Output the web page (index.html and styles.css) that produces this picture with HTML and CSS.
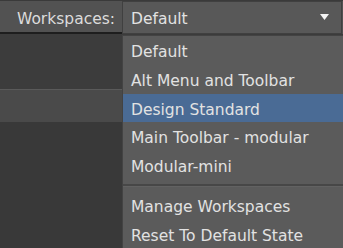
FILE: index.html
```html
<!DOCTYPE html>
<html>
<head>
<meta charset="utf-8">
<link rel="stylesheet" href="styles.css">
</head>
<body>
<div class="app">
  <div class="topbar">
    <span class="label">Workspaces:</span>
    <div class="combo">
      <span class="combo-text">Default</span>
      <svg class="arrow" width="9" height="6" viewBox="0 0 9 6"><path d="M0 0H9L4.5 6Z" fill="#f4f4f4"/></svg>
    </div>
  </div>
  <div class="panel">
    <div class="panel-dark"></div>
    <div class="panel-band"></div>
    <div class="panel-rest"></div>
  </div>
  <ul class="menu">
    <li class="item">Default</li>
    <li class="item">Alt Menu and Toolbar</li>
    <li class="item active">Design Standard</li>
    <li class="item">Main Toolbar - modular</li>
    <li class="item">Modular-mini</li>
    <li class="sep"></li>
    <li class="item">Manage Workspaces</li>
    <li class="item">Reset To Default State</li>
  </ul>
</div>
</body>
</html>
```
FILE: styles.css
```css
html, body {
  margin: 0;
  padding: 0;
  background: #3b3b3b;
  overflow: hidden;
}
.app {
  position: relative;
  width: 343px;
  height: 248px;
  font-family: "DejaVu Sans", sans-serif;
  font-size: 15.5px;
  color: #e2e2e2;
}
.topbar {
  height: 34px;
  box-sizing: border-box;
  background: #525252;
  border-top: 1px solid #3a3a3a;
  display: flex;
  align-items: stretch;
}
.label {
  width: 122px;
  box-sizing: border-box;
  padding-right: 7px;
  text-align: right;
  line-height: 36px;
  color: #dcdcdc;
  border-bottom: 2px solid #1e1e1e;
}
.combo {
  flex: 1;
  margin-right: 1px;
  box-sizing: border-box;
  background: #585858;
  border: 1px solid #404040;
  display: flex;
  align-items: center;
  justify-content: space-between;
  padding: 3px 12px 0 8px;
}
.arrow { display: block; margin-top: -4px; }
.panel {
  width: 122px;
  display: flex;
  flex-direction: column;
}
.panel-dark { height: 55px; background: #3c3c3c; }
.panel-band { height: 32px; background: #4a4a4a; border-top: 1px solid #5a5a5a; }
.panel-rest { height: 130px; background: #393939; }
.menu {
  position: absolute;
  left: 122px;
  top: 35px;
  width: 220px;
  margin: 0;
  padding: 0;
  list-style: none;
  background: #5b5b5b;
  border-left: 1px solid #434343;
  border-top: 1px solid #434343;
  height: 220px;
}
.item {
  height: 28.8px;
  line-height: 32px;
  padding-left: 8px;
  white-space: nowrap;
}
.item.active { background: #4a6b95; }
.sep {
  height: 0;
  border-top: 2px solid #474747;
  border-bottom: 1px solid #626262;
  margin: 4px 0 4px 0;
}
```
